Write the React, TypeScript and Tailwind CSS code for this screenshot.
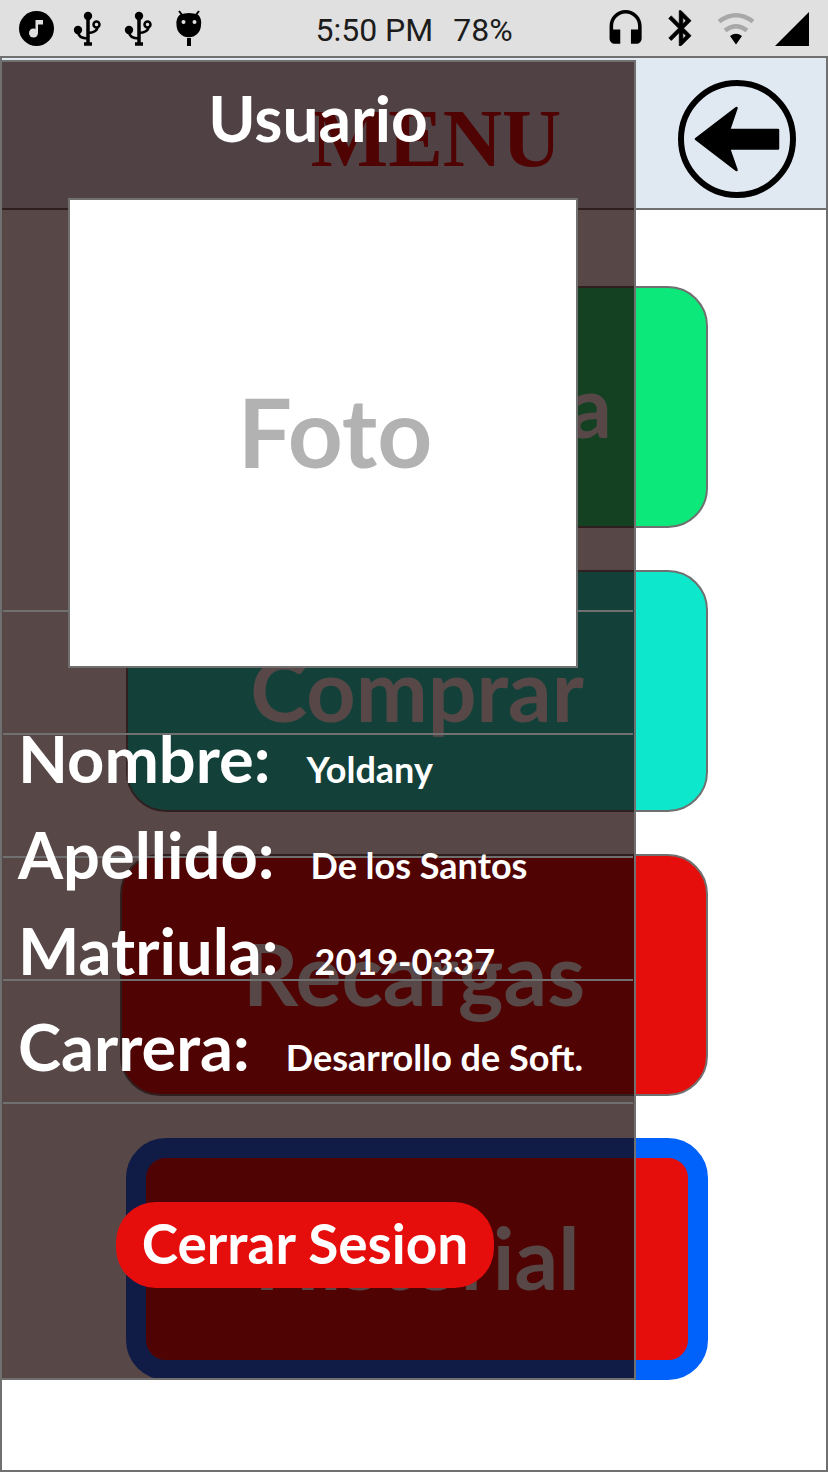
import type { ReactNode } from "react";

function StatusIcon({ viewBox = "0 0 36 36", children }: { viewBox?: string; children: ReactNode }) {
  return (
    <svg viewBox={viewBox} className="size-9 shrink-0" fill="black" aria-hidden="true">
      {children}
    </svg>
  );
}

function UsbIcon() {
  return (
    <StatusIcon>
      <circle cx="19" cy="6" r="4.200" />
      <circle cx="9" cy="20" r="4.200" />
      <g fill="none" stroke="black">
        <path d="M19 6V34" strokeWidth="3.500" />
        <path d="M15 34h8" strokeWidth="3.500" />
        <circle cx="27.500" cy="14.500" r="3" strokeWidth="2.500" />
        <path d="M9 21c0 5 4 7.500 10 7.500M28.500 17c0 4-4 5.500-9.500 6" strokeWidth="2.500" />
      </g>
    </StatusIcon>
  );
}

function StatusBar() {
  return (
    <div className="grid h-14 grid-cols-[1fr_auto_1fr] items-center bg-[#e0e0e0] px-[18px]">
      <div className="flex gap-[15px]">
        <StatusIcon>
          <circle cx="18.500" cy="18.500" r="17.500" />
          <circle cx="15.500" cy="23" r="4.500" fill="#e0e0e0" />
          <path d="M17.500 10h7.500v4.500h-5V23h-2.500z" fill="#e0e0e0" />
        </StatusIcon>
        <UsbIcon />
        <UsbIcon />
        <StatusIcon>
          <path d="M9 4.500Q18 1.500 27 4.500A12 12 0 0 1 30 15a12 12 0 0 1-24.500 0A12 12 0 0 1 9 4.500z" />
          <path d="M8 1l4 5M28 1l-4 5" stroke="black" strokeWidth="2" />
          <circle cx="12.500" cy="12" r="2" fill="#e0e0e0" />
          <circle cx="23.500" cy="12" r="2" fill="#e0e0e0" />
          <path d="M16 28h4v9h-4z" />
        </StatusIcon>
      </div>
      <div className="flex gap-5 pt-1 font-[Roboto,sans-serif] text-[32px] leading-10 text-[#1c1c1c]">
        <span>5:50 PM</span>
        <span>78%</span>
      </div>
      <div className="flex justify-end gap-5">
        <StatusIcon viewBox="1 1 20.2 20.2">
          <path d="M12 1c-4.970 0-9 4.030-9 9v7c0 1.660 1.340 3 3 3h3v-8H5v-2c0-3.870 3.130-7 7-7s7 3.130 7 7v2h-4v8h3c1.660 0 3-1.340 3-3v-7c0-4.970-4.030-9-9-9z" />
        </StatusIcon>
        <StatusIcon viewBox="1.1 1.6 20.6 20.6">
          <path
            d="M17.710 7.710L12 2h-1v7.590L6.410 5 5 6.410 10.590 12 5 17.590 6.410 19 11 14.410V22h1l5.710-5.710-4.300-4.290 4.300-4.290zM13 5.830l1.880 1.880L13 9.590V5.830zm1.880 10.460L13 18.170v-3.760l1.880 1.880z"
            stroke="black"
            strokeWidth="0.500"
          />
        </StatusIcon>
        <StatusIcon>
          <g fill="none" stroke="#a8a8a8" strokeWidth="4.500">
            <path d="M1 11.500Q18 -1 35 11.500" />
            <path d="M7 20.500Q18 12 29 20.500" />
          </g>
          <path d="M12 26Q18 21.500 24 26L18 34.500z" />
        </StatusIcon>
        <StatusIcon>
          <path d="M35 2V36H1z" />
        </StatusIcon>
      </div>
    </div>
  );
}

const menuItems = [
  { label: "Cafeteria", style: "border-2 border-[#707070] bg-[#0de87a] pl-10" },
  { label: "Comprar", style: "border-2 border-[#707070] bg-[#0de8cc]" },
  { label: "Recargas", style: "-ml-1.5 border-2 border-[#707070] bg-[#e50e0c]" },
  { label: "Historial", style: "border-[20px] border-[#0062fb] bg-[#e50e0c]" },
];

const details = [
  { label: "Nombre:", value: "Yoldany" },
  { label: "Apellido:", value: "De los Santos" },
  { label: "Matriula:", value: "2019-0337" },
  { label: "Carrera:", value: "Desarrollo de Soft." },
];

function UserDrawer() {
  return (
    <aside className="absolute top-0.5 bottom-[90px] -left-0.5 flex w-[636px] flex-col border-2 border-[#707070] bg-[rgba(22,0,0,0.722)] text-white">
      <div className="absolute inset-x-px top-[548px] flex flex-col gap-[121px]" aria-hidden="true">
        <hr className="border-t-2 border-[#707070]" />
        <hr className="border-t-2 border-[#707070]" />
        <hr className="border-t-2 border-[#707070]" />
        <hr className="border-t-2 border-[#707070]" />
        <hr className="border-t-2 border-[#707070]" />
      </div>
      <div className="relative flex flex-col">
        <h2 className="pt-5 text-center text-[64px] leading-[72px] font-bold">Usuario</h2>
        <div className="mt-11 mr-14 ml-[66px] flex h-[470px] items-center justify-center border-2 border-[#707070] bg-white pb-1 pl-6 text-[96px] leading-none font-bold text-[#b2b2b2]">
          Foto
        </div>
        <dl className="mt-[42px] flex flex-col pl-4">
          {details.map((d) => (
            <div key={d.label} className="flex h-24 items-baseline gap-9 whitespace-nowrap">
              <dt className="text-[65px] leading-24 font-bold">{d.label}</dt>
              <dd className="text-[36px] font-bold">{d.value}</dd>
            </div>
          ))}
        </dl>
        <button
          type="button"
          className="mt-[108px] ml-[114px] h-[86px] w-[378px] rounded-[40px] bg-[#e50e0c] pb-1 text-[55px] leading-none font-bold whitespace-nowrap"
        >
          Cerrar Sesion
        </button>
      </div>
    </aside>
  );
}

export default function App() {
  return (
    <div className="flex min-h-screen flex-col bg-white font-[Lato,sans-serif]">
      <StatusBar />
      <div className="relative flex grow flex-col border-2 border-[#707070]">
        <header className="flex h-[152px] items-center border-b-2 border-[#707070] bg-[#e0e8f2] pt-3 pr-[30px]">
          <h1 className="grow pl-48 text-center font-['Liberation_Serif',serif] text-[82px] leading-none font-bold text-[#e50e0c]">
            MENU
          </h1>
          <button type="button" aria-label="Volver" className="size-[118px] shrink-0">
            <svg viewBox="0 0 118 118" aria-hidden="true">
              <circle cx="59" cy="59" r="56" fill="none" stroke="black" strokeWidth="6" />
              <path
                d="M18 59L58.500 28L51 50H100V68.500H51L58.500 90z"
                stroke="black"
                strokeWidth="2.500"
                strokeLinejoin="round"
              />
            </svg>
          </button>
        </header>
        <nav className="flex flex-col gap-[42px] pt-[76px] pr-[118px] pb-[90px] pl-[124px]">
          {menuItems.map((item) => (
            <button
              key={item.label}
              type="button"
              className={`h-[242px] rounded-[40px] pb-1 text-[86px] leading-none font-bold text-white ${item.style}`}
            >
              {item.label}
            </button>
          ))}
        </nav>
        <UserDrawer />
      </div>
    </div>
  );
}
